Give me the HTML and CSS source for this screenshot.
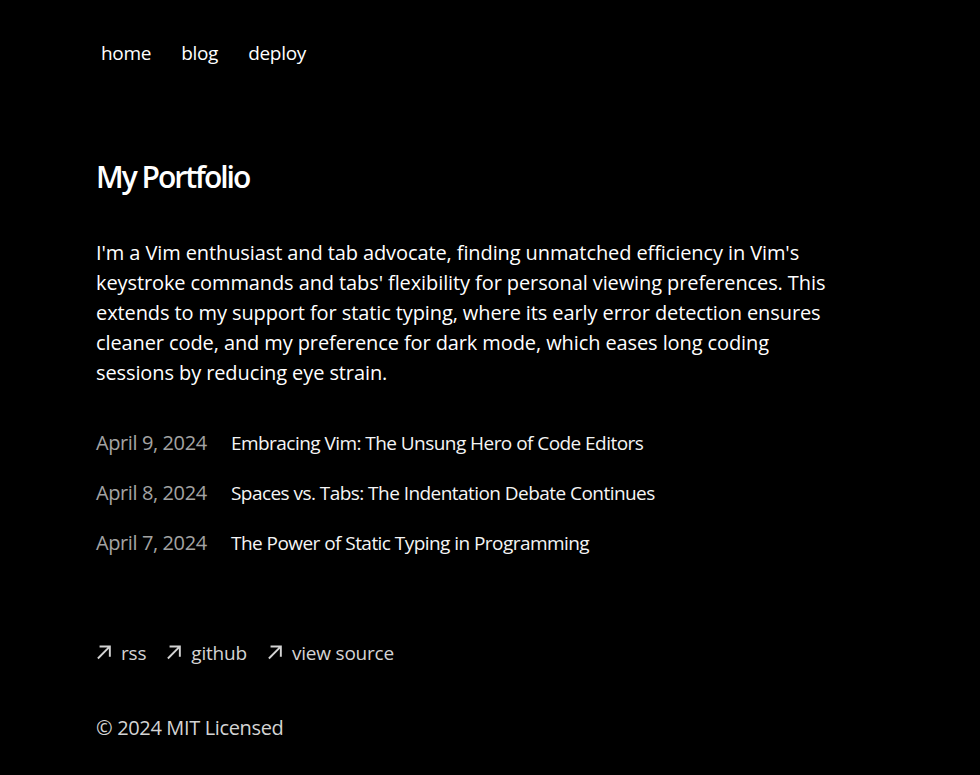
FILE: index.html
```html
<!DOCTYPE html>
<html lang="en">
<head>
<meta charset="utf-8">
<title>My Portfolio</title>
<link rel="stylesheet" href="styles.css">
</head>
<body>
<div class="page">
  <aside class="nav-wrap">
    <nav class="nav">
      <a class="nav-link" href="#">home</a>
      <a class="nav-link" href="#">blog</a>
      <a class="nav-link" href="#">deploy</a>
    </nav>
  </aside>
  <main class="main">
    <section>
      <h1 class="title">My Portfolio</h1>
      <p class="intro">I'm a Vim enthusiast and tab advocate, finding unmatched efficiency in Vim's keystroke commands and tabs' flexibility for personal viewing preferences. This extends to my support for static typing, where its early error detection ensures cleaner code, and my preference for dark mode, which eases long coding sessions by reducing eye strain.</p>
      <div class="posts">
        <a class="post" href="#">
          <span class="post-date">April 9, 2024</span>
          <span class="post-title">Embracing Vim: The Unsung Hero of Code Editors</span>
        </a>
        <a class="post" href="#">
          <span class="post-date">April 8, 2024</span>
          <span class="post-title">Spaces vs. Tabs: The Indentation Debate Continues</span>
        </a>
        <a class="post" href="#">
          <span class="post-date">April 7, 2024</span>
          <span class="post-title">The Power of Static Typing in Programming</span>
        </a>
      </div>
    </section>
  </main>
  <footer class="footer">
    <ul class="links">
      <li><a class="ext" href="#"><svg class="arrow" viewBox="0 0 12 12" width="15" height="15"><path d="M2.07102 11.3494L0.963068 10.2415L9.2017 1.98864H2.83807L2.85227 0.454545H11.8438V9.46023H10.2955L10.3097 3.09659L2.07102 11.3494Z" fill="currentColor"/></svg><span class="ext-label">rss</span></a></li>
      <li><a class="ext" href="#"><svg class="arrow" viewBox="0 0 12 12" width="15" height="15"><path d="M2.07102 11.3494L0.963068 10.2415L9.2017 1.98864H2.83807L2.85227 0.454545H11.8438V9.46023H10.2955L10.3097 3.09659L2.07102 11.3494Z" fill="currentColor"/></svg><span class="ext-label">github</span></a></li>
      <li><a class="ext" href="#"><svg class="arrow" viewBox="0 0 12 12" width="15" height="15"><path d="M2.07102 11.3494L0.963068 10.2415L9.2017 1.98864H2.83807L2.85227 0.454545H11.8438V9.46023H10.2955L10.3097 3.09659L2.07102 11.3494Z" fill="currentColor"/></svg><span class="ext-label">view source</span></a></li>
    </ul>
    <p class="copy">© 2024 MIT Licensed</p>
  </footer>
</div>
</body>
</html>
```
FILE: styles.css
```css
html, body {
  margin: 0;
  padding: 0;
  background: #000;
}
body {
  color: #fff;
  font-family: "Open Sans", "Noto Sans", sans-serif;
  font-size: 20px;
  line-height: 30px;
  letter-spacing: -0.1px;
  -webkit-font-smoothing: antialiased;
}
a {
  color: inherit;
  text-decoration: none;
}
.page {
  max-width: 745px;
  margin: 0 0 0 96px;
  padding-top: 33px;
}
.nav {
  display: flex;
  align-items: center;
  margin-left: -10px;
}
.nav-link {
  padding: 5px 10px;
  margin: 0 5px;
  color: #fff;
  font-size: 19px;
  letter-spacing: -0.3px;
}
.nav-link:first-child {
  margin-left: 5px;
}
.main {
  padding-top: 84px;
}
.title {
  margin: 0 0 41px;
  font-size: 30px;
  line-height: 40px;
  font-weight: 600;
  letter-spacing: -2px;
  color: #fff;
}
.intro {
  margin: 0 0 40px;
}
.posts {
  display: flex;
  flex-direction: column;
}
.post {
  display: flex;
  gap: 10px;
  margin-bottom: 20px;
}
.post-date {
  width: 125px;
  flex: none;
  color: #a3a3a3;
  letter-spacing: -0.4px;
  font-variant-numeric: tabular-nums;
}
.post-title {
  color: #f5f5f5;
  font-size: 19px;
  letter-spacing: -0.55px;
}
.footer {
  padding-top: 57px;
}
.links {
  list-style: none;
  margin: 0;
  padding: 0;
  display: flex;
  gap: 20px;
  color: #d4d4d4;
}
.ext {
  display: flex;
  align-items: center;
  height: 35px;
}
.arrow {
  display: block;
  flex: none;
}
.ext-label {
  margin-left: 10px;
  font-size: 19px;
  letter-spacing: -0.2px;
}
.copy {
  margin: 43px 0 0;
  color: #d4d4d4;
  letter-spacing: -0.35px;
}
```
